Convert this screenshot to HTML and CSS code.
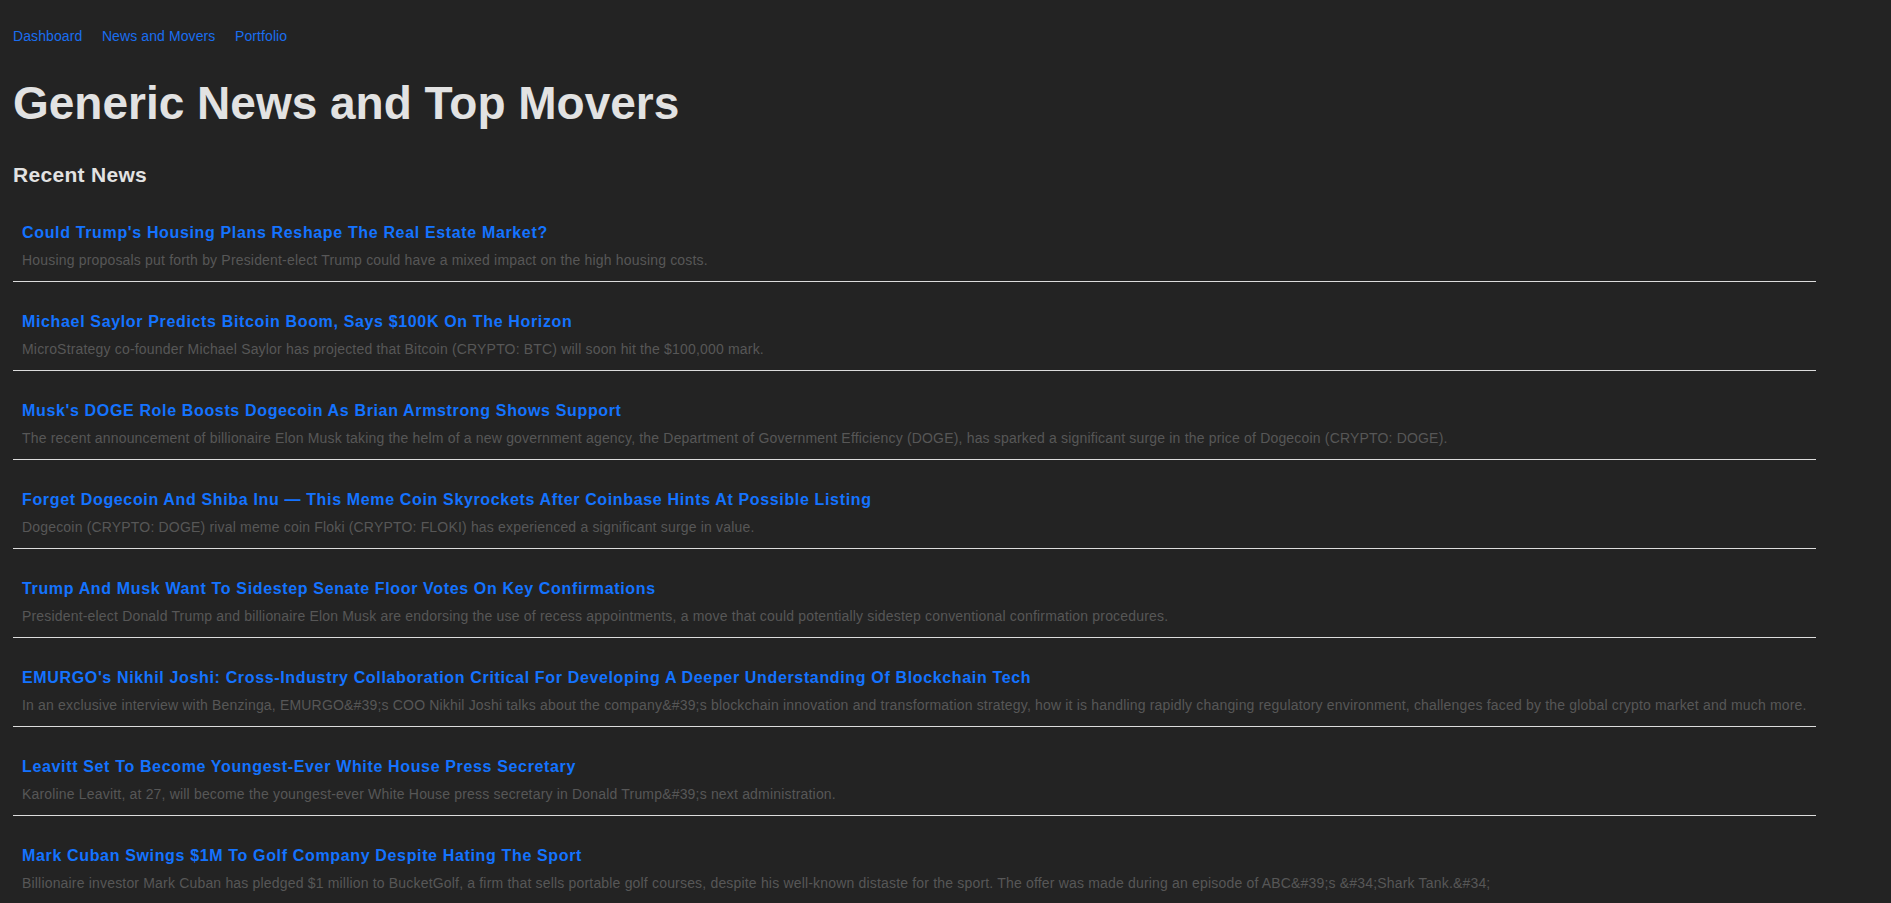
FILE: index.html
```html
<!DOCTYPE html>
<html lang="en">
<head>
<meta charset="utf-8">
<title>Generic News and Top Movers</title>
<link rel="stylesheet" href="styles.css">
</head>
<body>
<div class="page">
  <nav class="nav">
    <a href="#">Dashboard</a>
    <a href="#">News and Movers</a>
    <a href="#">Portfolio</a>
  </nav>
  <h1 class="page-title">Generic News and Top Movers</h1>
  <h2 class="section-title">Recent News</h2>
  <ul class="news-list">
    <li class="news-item">
      <a class="news-title" href="#">Could Trump's Housing Plans Reshape The Real Estate Market?</a>
      <p class="news-desc">Housing proposals put forth by President-elect Trump could have a mixed impact on the high housing costs.</p>
    </li>
    <li class="news-item">
      <a class="news-title" href="#">Michael Saylor Predicts Bitcoin Boom, Says $100K On The Horizon</a>
      <p class="news-desc">MicroStrategy co-founder Michael Saylor has projected that Bitcoin (CRYPTO: BTC) will soon hit the $100,000 mark.</p>
    </li>
    <li class="news-item">
      <a class="news-title" href="#">Musk's DOGE Role Boosts Dogecoin As Brian Armstrong Shows Support</a>
      <p class="news-desc">The recent announcement of billionaire Elon Musk taking the helm of a new government agency, the Department of Government Efficiency (DOGE), has sparked a significant surge in the price of Dogecoin (CRYPTO: DOGE).</p>
    </li>
    <li class="news-item">
      <a class="news-title" href="#">Forget Dogecoin And Shiba Inu — This Meme Coin Skyrockets After Coinbase Hints At Possible Listing</a>
      <p class="news-desc">Dogecoin (CRYPTO: DOGE) rival meme coin Floki (CRYPTO: FLOKI) has experienced a significant surge in value.</p>
    </li>
    <li class="news-item">
      <a class="news-title" href="#">Trump And Musk Want To Sidestep Senate Floor Votes On Key Confirmations</a>
      <p class="news-desc">President-elect Donald Trump and billionaire Elon Musk are endorsing the use of recess appointments, a move that could potentially sidestep conventional confirmation procedures.</p>
    </li>
    <li class="news-item">
      <a class="news-title" href="#">EMURGO's Nikhil Joshi: Cross-Industry Collaboration Critical For Developing A Deeper Understanding Of Blockchain Tech</a>
      <p class="news-desc">In an exclusive interview with Benzinga, EMURGO&amp;#39;s COO Nikhil Joshi talks about the company&amp;#39;s blockchain innovation and transformation strategy, how it is handling rapidly changing regulatory environment, challenges faced by the global crypto market and much more.</p>
    </li>
    <li class="news-item">
      <a class="news-title" href="#">Leavitt Set To Become Youngest-Ever White House Press Secretary</a>
      <p class="news-desc">Karoline Leavitt, at 27, will become the youngest-ever White House press secretary in Donald Trump&amp;#39;s next administration.</p>
    </li>
    <li class="news-item">
      <a class="news-title" href="#">Mark Cuban Swings $1M To Golf Company Despite Hating The Sport</a>
      <p class="news-desc">Billionaire investor Mark Cuban has pledged $1 million to BucketGolf, a firm that sells portable golf courses, despite his well-known distaste for the sport. The offer was made during an episode of ABC&amp;#39;s &amp;#34;Shark Tank.&amp;#34;</p>
    </li>
  </ul>
</div>
</body>
</html>
```

FILE: styles.css
```css
html, body {
  margin: 0;
  padding: 0;
  background: #232323;
}

body {
  font-family: "Liberation Sans", Arial, sans-serif;
  color: #e2e2e2;
}

.page {
  padding: 28px 13px 0 13px;
}

.nav {
  display: flex;
  gap: 19.5px;
  font-size: 14px;
  line-height: 16px;
  letter-spacing: 0.1px;
}

.nav a {
  color: #1a6ef0;
  text-decoration: none;
}

.page-title {
  margin: 33px 0 0 0;
  font-size: 46px;
  line-height: 53px;
  font-weight: bold;
  color: #e2e2e2;
}

.section-title {
  margin: 33px 0 0 0;
  font-size: 21px;
  line-height: 24px;
  font-weight: bold;
  letter-spacing: 0.3px;
  color: #e2e2e2;
}

.news-list {
  list-style: none;
  margin: 23px 62px 0 0;
  padding: 0;
}

.news-item {
  padding: 14px 0 13px 9px;
  margin-bottom: 17px;
  border-bottom: 1px solid #dcdcdc;
}

.news-title {
  display: block;
  font-size: 16px;
  line-height: 18px;
  font-weight: bold;
  letter-spacing: 0.65px;
  color: #1473ff;
  text-decoration: none;
}

.news-desc {
  margin: 10px 0 0 0;
  font-size: 14px;
  line-height: 16px;
  letter-spacing: 0.18px;
  color: #575757;
}
```
